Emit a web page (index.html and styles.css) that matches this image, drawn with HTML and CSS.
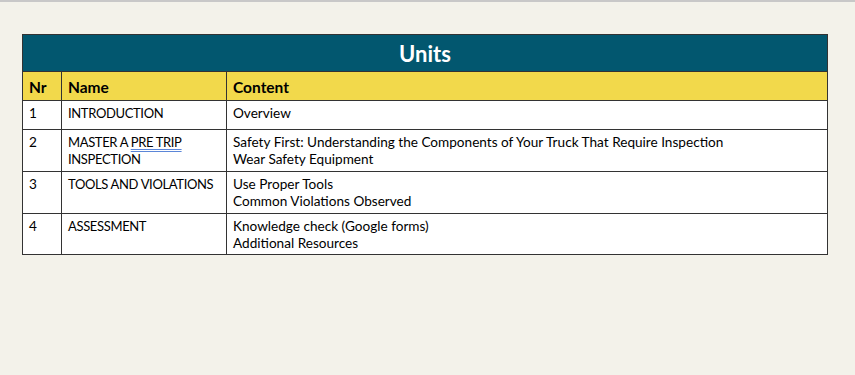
FILE: index.html
```html
<!DOCTYPE html>
<html lang="en">
<head>
    <meta charset="UTF-8">
    <meta name="viewport" content="width=device-width, initial-scale=1.0">
    <title>Units</title>
    <link rel="stylesheet" href="styles.css">
</head>
<body>

    <div class="page">
        <table class="units">
            <colgroup>
                <col class="col-nr">
                <col class="col-name">
                <col>
            </colgroup>
            <thead>
                <tr class="title-row">
                    <th colspan="3">Units</th>
                </tr>
                <tr class="head-row">
                    <th>Nr</th>
                    <th>Name</th>
                    <th>Content</th>
                </tr>
            </thead>
            <tbody>
                <tr class="short">
                    <td>1</td>
                    <td class="name">INTRODUCTION</td>
                    <td>Overview</td>
                </tr>
                <tr>
                    <td>2</td>
                    <td class="name">MASTER A <span class="spell">PRE TRIP</span><br>INSPECTION</td>
                    <td>Safety First: Understanding the Components of Your Truck That Require Inspection<br>Wear Safety Equipment</td>
                </tr>
                <tr>
                    <td>3</td>
                    <td class="name">TOOLS AND VIOLATIONS</td>
                    <td>Use Proper Tools<br>Common Violations Observed</td>
                </tr>
                <tr class="last">
                    <td>4</td>
                    <td class="name">ASSESSMENT</td>
                    <td>Knowledge check (Google forms)<br>Additional Resources</td>
                </tr>
            </tbody>
        </table>
    </div>

</body>
</html>
```

FILE: styles.css
```css
body {
    margin: 0;
    background: #f3f2ea;
    border-top: 2px solid #c8c8c8;
    font-family: Lato, "Noto Sans", sans-serif;
    color: #000;
}
.page {
    padding: 32px 0 0 22px;
}
.units {
    width: 806px;
    table-layout: fixed;
    border-collapse: collapse;
    background: #fff;
    font-size: 13.6px;
    line-height: 17px;
}
.col-nr {
    width: 39px;
}
.col-name {
    width: 165px;
}
.units th,
.units td {
    border: 1px solid #333;
    text-align: left;
    vertical-align: top;
    padding: 4px 6px 3px 6px;
}
.title-row th {
    background: #02576f;
    color: #fff;
    text-align: center;
    font-size: 22px;
    line-height: 26px;
    height: 30px;
    padding: 6px 6px 0;
}
.head-row th {
    background: #f2d94b;
    font-size: 15.5px;
    line-height: 20px;
    height: 20px;
    padding: 5px 6px 3px;
}
/* caps in Lato run wide, so the name column is set a touch tighter */
.name {
    white-space: nowrap;
    font-size: 13px;
    letter-spacing: -0.35px;
}
tr.short td {
    height: 21px;
}
tr.last td {
    padding-bottom: 2px;
}
.units tbody tr + tr td {
    border-top-color: #777;
}
.spell {
    text-decoration: underline double #5b86d8;
    text-underline-offset: 2px;
}
```
